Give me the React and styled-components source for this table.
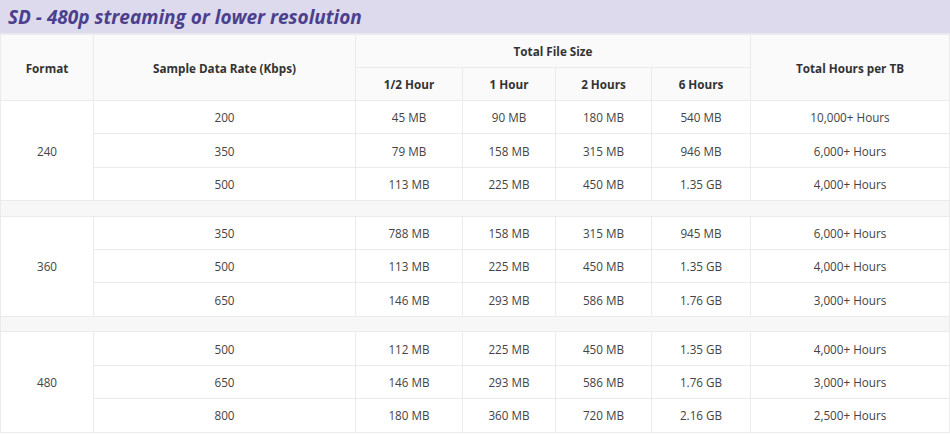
import React from 'react'
import styled, { createGlobalStyle } from 'styled-components'

const GlobalStyle = createGlobalStyle`
    body {
        margin: 0;
        background: #ffffff;
        font-family: 'Open Sans', 'Liberation Sans', sans-serif;
    }
`

const groups = [
    {
        format: '240',
        rows: [
            ['200', '45 MB', '90 MB', '180 MB', '540 MB', '10,000+ Hours'],
            ['350', '79 MB', '158 MB', '315 MB', '946 MB', '6,000+ Hours'],
            ['500', '113 MB', '225 MB', '450 MB', '1.35 GB', '4,000+ Hours'],
        ],
    },
    {
        format: '360',
        rows: [
            ['350', '788 MB', '158 MB', '315 MB', '945 MB', '6,000+ Hours'],
            ['500', '113 MB', '225 MB', '450 MB', '1.35 GB', '4,000+ Hours'],
            ['650', '146 MB', '293 MB', '586 MB', '1.76 GB', '3,000+ Hours'],
        ],
    },
    {
        format: '480',
        rows: [
            ['500', '112 MB', '225 MB', '450 MB', '1.35 GB', '4,000+ Hours'],
            ['650', '146 MB', '293 MB', '586 MB', '1.76 GB', '3,000+ Hours'],
            ['800', '180 MB', '360 MB', '720 MB', '2.16 GB', '2,500+ Hours'],
        ],
    },
]

const widths = [93, 262, 107, 93, 96, 99, 199]

const App = () => {
    return (
        <Wrapper>
            <GlobalStyle />
            <Title>SD - 480p streaming or lower resolution</Title>
            <Table>
                <colgroup>
                    {widths.map((w, i) => <col key={i} style={{ width: w }} />)}
                </colgroup>
                <thead>
                    <tr>
                        <Th rowSpan={2}>Format</Th>
                        <Th rowSpan={2}>Sample Data Rate (Kbps)</Th>
                        <Th colSpan={4}>Total File Size</Th>
                        <Th rowSpan={2}>Total Hours per TB</Th>
                    </tr>
                    <tr>
                        <Th>1/2 Hour</Th>
                        <Th>1 Hour</Th>
                        <Th>2 Hours</Th>
                        <Th>6 Hours</Th>
                    </tr>
                </thead>
                <tbody>
                    {groups.map((g, gi) => (
                        <React.Fragment key={g.format}>
                            {gi > 0 && (
                                <tr>
                                    <Spacer colSpan={7} />
                                </tr>
                            )}
                            {g.rows.map((r, ri) => (
                                <tr key={ri}>
                                    {ri === 0 && <Td rowSpan={3}>{g.format}</Td>}
                                    {r.map((c, ci) => <Td key={ci}>{c}</Td>)}
                                </tr>
                            ))}
                        </React.Fragment>
                    ))}
                </tbody>
            </Table>
        </Wrapper>
    )
}

export default App

const Wrapper = styled.div`
    width: 950px;
`

const Title = styled.h3`
    margin: 0;
    height: 34px;
    box-sizing: border-box;
    padding: 4px 8px 0;
    background-color: #dcdaec;
    border-bottom: 1px solid #eaeaf2;
    color: #4b3f8e;
    font-size: 19px;
    font-weight: 700;
    font-style: italic;
    line-height: 26px;
`

const Table = styled.table`
    width: 950px;
    border-collapse: collapse;
    table-layout: fixed;
    font-size: 11.7px;
    color: #444444;
    text-align: center;
`

const Th = styled.th`
    height: 32px;
    padding: 0 6px;
    background-color: #fafafa;
    border: 1px solid #ebebeb;
    color: #333333;
    font-weight: 700;
`

const Td = styled.td`
    height: 32.4px;
    padding: 0 6px;
    background-color: #ffffff;
    border: 1px solid #ebebeb;
`

const Spacer = styled.td`
    height: 14.5px;
    padding: 0;
    background-color: #f7f7f7;
    border: 1px solid #ebebeb;
`
